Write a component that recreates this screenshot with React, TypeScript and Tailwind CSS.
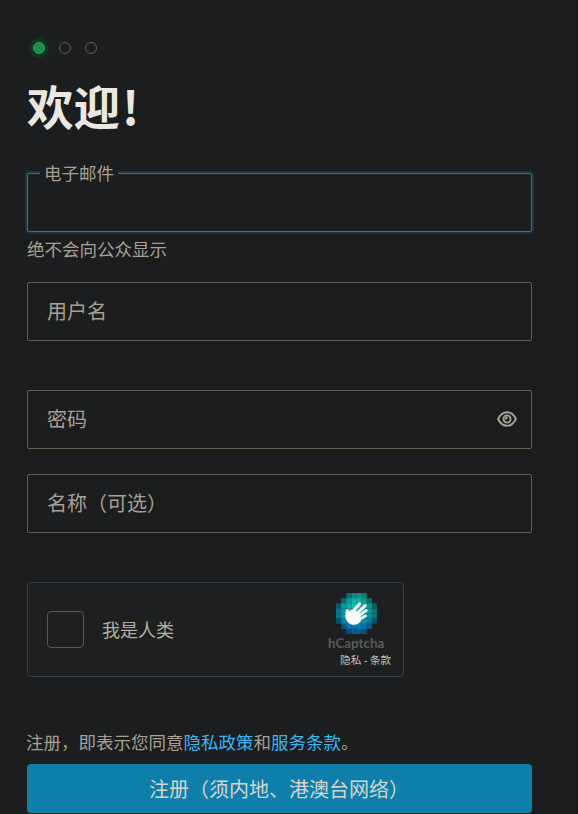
import type { ReactNode } from "react";

const mosaic = [
  { y: 0, from: 2, colors: ["#0a6f72", "#0b8a82", "#0b9084", "#0a7a74"] },
  { y: 1, from: 1, colors: ["#086a70", "#0a9a94", "#0fb5a4", "#10b8a4", "#0a9a8c", "#086f6c"] },
  { y: 2, from: 0, colors: ["#085a66", "#0898a0", "#0cb0ac", "#10bfae", "#10bfae", "#0cb0a0", "#089488", "#085c60"] },
  { y: 3, from: 0, colors: ["#077484", "#0898a8", "#0aacb0", "#0cb4b0", "#0cb4b0", "#0aaca8", "#089898", "#087474"] },
  { y: 4, from: 0, colors: ["#07748c", "#0892b0", "#08a0b4", "#08a8b4", "#08a8b4", "#08a0b0", "#0890a0", "#077480"] },
  { y: 5, from: 0, colors: ["#06506c", "#0780ac", "#078cb4", "#0892b4", "#0892b4", "#088cb0", "#087c9c", "#06505f"] },
  { y: 6, from: 1, colors: ["#065880", "#0674ac", "#077cb0", "#077cb0", "#0774a8", "#065c80"] },
  { y: 7, from: 2, colors: ["#065080", "#065c98", "#065c98", "#065080"] },
];

function CaptchaLogo() {
  return (
    <svg width="41" height="41" viewBox="0 0 41 41" aria-hidden="true">
      {mosaic.map((row) =>
        row.colors.map((color, i) => (
          <rect
            key={`${row.y}-${i}`}
            x={(row.from + i) * 5.125}
            y={row.y * 5.125}
            width="5.2"
            height="5.2"
            fill={color}
          />
        ))
      )}
      <g stroke="#fff" strokeLinecap="round" fill="none">
        <path d="M16 19.500 23.700 10.800" strokeWidth="3" />
        <path d="M19 22 29.300 12.600" strokeWidth="3" />
        <path d="M20.500 24.500 30.200 17.600" strokeWidth="2.900" />
        <path d="M21 27.500 29.700 22.900" strokeWidth="2.700" />
        <path d="M12.500 22.500 11.300 17.600" strokeWidth="3" />
      </g>
      <path
        d="M9.800 17.500c-.8 3.500-.7 6.300.1 8.500 1.500 4.300 5.500 6.300 9 5.700 3.300-.6 5-2.400 6.300-4.300L23.500 20l-4.500-3-4-.3-2.300 2.300z"
        fill="#fff"
      />
    </svg>
  );
}

function EyeIcon() {
  return (
    <svg className="-mt-px" width="20" height="18" viewBox="0 0 20 18" fill="none" stroke="#a8a095" aria-hidden="true">
      <path
        d="M1.100 9C3.200 4.600 6.300 2.200 10 2.200S16.800 4.600 18.900 9c-2.100 4.400-5.200 6.800-8.900 6.800S3.200 13.400 1.100 9z"
        strokeWidth="1.900"
      />
      <circle cx="10" cy="9" r="3.600" strokeWidth="1.900" />
      <path d="M7.800 8.800A2.200 2.200 0 0 0 10 6.600" strokeWidth="1.900" />
    </svg>
  );
}

function Field({ label, children }: { label: string; children?: ReactNode }) {
  return (
    <div className="flex h-[59px] items-center justify-between rounded-[2px] border border-[#676053] pr-[14px] pl-[19px] text-[20px] text-[#a8a095]">
      <span className="-mt-[2px]">{label}</span>
      {children}
    </div>
  );
}

export default function App() {
  return (
    <main className="h-[814px] overflow-hidden border-r border-[#111213] bg-[#1b1d1e] pr-[45px] pl-[27px] font-['Noto_Sans_CJK_SC',sans-serif] text-[#a8a095]">
      <div className="flex h-[54px] items-end gap-[14px] pl-[6px]">
        <span className="size-3 rounded-full border border-[#24a453] bg-[#1f8a46] shadow-[0_0_0_4px_#0e351d]" />
        <span className="size-3 rounded-full border border-[#676053]" />
        <span className="size-3 rounded-full border border-[#676053]" />
      </div>

      <h1 className="mt-[22px] h-[58px] text-[46.500px] leading-[58px] font-bold text-[#ece8e1]">
        欢迎<span className="ml-[2px]">!</span>
      </h1>

      <div className="relative mt-[39px] h-[59px] rounded-[2px] border border-[#0f82af] shadow-[0_0_0_2px_#173541]">
        <span className="absolute -top-[14px] left-[12px] bg-[#1b1d1e] pr-[4px] pl-[4px] text-[17.500px] leading-[26px]">
          电子邮件
        </span>
      </div>
      <p className="mt-[4px] h-[26px] text-[17.500px] leading-[26px]">绝不会向公众显示</p>

      <div className="mt-[20px]">
        <Field label="用户名" />
      </div>
      <div className="mt-[49px]">
        <Field label="密码">
          <EyeIcon />
        </Field>
      </div>
      <div className="mt-[25px]">
        <Field label="名称（可选）" />
      </div>

      <section className="mt-[49px] flex h-[95px] w-[377px] items-center rounded-[4px] border border-[#3b3e40] bg-[#1d1f20] pl-[19px]">
        <span className="size-[37px] rounded-[4px] border border-[#55585a]" />
        <span className="-mt-px ml-[18px] text-[18px] text-[#b5ae9f]">我是人类</span>
        <div className="mr-[11px] ml-auto flex h-full w-[64px] flex-col pt-[10px]">
          <div className="h-[41px] pl-[8px]">
            <CaptchaLogo />
          </div>
          <span className="h-[18px] font-['Lato',sans-serif] text-[13.400px] leading-[19px] font-bold text-[#5a5a5a]">
            hCaptcha
          </span>
          <span className="pl-[12px] text-[10.700px] leading-[15px] whitespace-nowrap text-[#c8c2b6]">
            隐私 - 条款
          </span>
        </div>
      </section>

      <p className="-ml-px mt-[52px] h-[26px] text-[17.500px] leading-[26px] whitespace-nowrap">
        注册，即表示您同意<a className="text-[#38b8f2]">隐私政策</a>和<a className="text-[#38b8f2]">服务条款</a>。
      </p>
      <button className="mt-[9px] block h-[49px] w-full rounded-[4px] bg-[#0e7fab] pt-px pr-px text-[20px] text-[#d8d4cc]">
        注册（须内地、港澳台网络）
      </button>
    </main>
  );
}
